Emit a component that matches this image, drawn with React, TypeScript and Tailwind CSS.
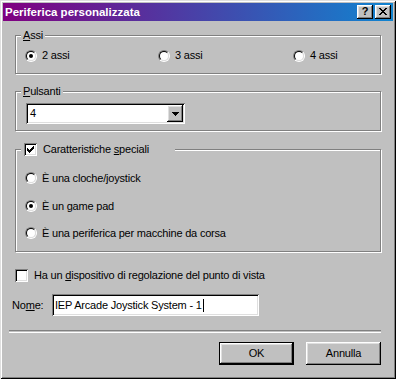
import React from "react";

const raised =
  "shadow-[inset_-1px_-1px_0_#000,inset_1px_1px_0_#fff,inset_-2px_-2px_0_#808080,inset_2px_2px_0_#dfdfdf]";
const sunken =
  "shadow-[inset_1px_1px_0_#808080,inset_-1px_-1px_0_#fff,inset_2px_2px_0_#000,inset_-2px_-2px_0_#dfdfdf]";

function Radio({ checked }: { checked?: boolean }) {
  return (
    <span className="relative inline-block w-[12px] h-[12px] shrink-0 rounded-full border border-t-[#808080] border-l-[#808080] border-r-white border-b-white">
      <span className="absolute inset-0 rounded-full border border-t-black border-l-black border-r-[#dfdfdf] border-b-[#dfdfdf] bg-white flex items-center justify-center">
        {checked && <span className="block w-[4px] h-[4px] rounded-full bg-black" />}
      </span>
    </span>
  );
}

function Check({ checked }: { checked?: boolean }) {
  return (
    <span className={`relative inline-block w-[13px] h-[13px] shrink-0 bg-white ${sunken}`}>
      {checked && (
        <svg className="absolute left-[3px] top-[3px]" width="7" height="7" viewBox="0 0 7 7">
          <path d="M0 2h1v1h1v1h1v-1h1v-1h1v-1h1v-1h1v3h-1v1h-1v1h-1v1h-1v1h-1v-1h-1v-1h-1v-1h-1z" fill="#000" />
        </svg>
      )}
    </span>
  );
}

function Group({
  label,
  className,
  children,
}: {
  label: React.ReactNode;
  className?: string;
  children?: React.ReactNode;
}) {
  return (
    <div
      className={`relative w-[366px] border border-[#808080] shadow-[inset_1px_1px_0_#fff,1px_1px_0_#fff] ${className ?? ""}`}
    >
      <div className="absolute left-[5px] top-[-7px] bg-[#c0c0c0] px-[2px] leading-[13px] flex items-center">
        {label}
      </div>
      {children}
    </div>
  );
}

export default function App() {
  return (
    <div className="w-[396px] h-[379px] bg-[#c0c0c0] relative flex flex-col text-[11px] leading-[13px] tracking-[-0.2px] text-black font-['Liberation_Sans',Arial,sans-serif] shadow-[inset_1px_1px_0_#dfdfdf,inset_-1px_-1px_0_#000,inset_2px_2px_0_#fff,inset_-2px_-2px_0_#808080]">
      {/* Title bar */}
      <div className="mt-[3px] mx-[3px] h-[18px] flex items-center bg-[linear-gradient(to_right,#800080,#1084d0)]">
        <span className="ml-[2px] text-white font-bold text-[11.5px] tracking-normal">Periferica personalizzata</span>
        <div className="ml-auto mr-[2px] flex gap-[2px]">
          <div className={`w-[16px] h-[14px] bg-[#c0c0c0] ${raised} flex items-center justify-center`}>
            <span className="font-bold text-[11px] leading-[11px] mt-[-1px] tracking-normal">?</span>
          </div>
          <div className={`w-[16px] h-[14px] bg-[#c0c0c0] ${raised} flex items-center justify-center`}>
            <svg width="8" height="7" viewBox="0 0 8 7" className="mt-[-1px]">
              <path
                d="M0 0h2v1h1v1h2v-1h1v-1h2v1h-1v1h-1v1h-1v1h1v1h1v1h1v1h-2v-1h-1v-1h-2v1h-1v1h-2v-1h1v-1h1v-1h1v-1h-1v-1h-1v-1h-1z"
                fill="#000"
              />
            </svg>
          </div>
        </div>
      </div>

      {/* Assi */}
      <Group
        className="ml-[15px] mt-[14px] h-[39px]"
        label={
          <span>
            <span className="underline">A</span>ssi
          </span>
        }
      >
        <div className="flex pl-[9px] pt-[13px]">
          <div className="w-[133px] flex items-center gap-[5px]">
            <Radio checked />
            <span>2 assi</span>
          </div>
          <div className="w-[135px] flex items-center gap-[5px]">
            <Radio />
            <span>3 assi</span>
          </div>
          <div className="flex items-center gap-[5px]">
            <Radio />
            <span>4 assi</span>
          </div>
        </div>
      </Group>

      {/* Pulsanti */}
      <Group
        className="ml-[15px] mt-[17px] h-[40px]"
        label={
          <span>
            <span className="underline">P</span>ulsanti
          </span>
        }
      >
        <div className="pl-[10px] pt-[11px]">
          <div className={`w-[159px] h-[21px] bg-white ${sunken} flex items-center p-[2px]`}>
            <span className="ml-[2px] flex-1">4</span>
            <div className={`w-[16px] h-[17px] bg-[#c0c0c0] ${raised} flex items-center justify-center`}>
              <svg width="7" height="4" viewBox="0 0 7 4">
                <path d="M0 0h7v1h-1v1h-1v1h-1v1h-1v-1h-1v-1h-1v-1h-1z" fill="#000" />
              </svg>
            </div>
          </div>
        </div>
      </Group>

      {/* Caratteristiche speciali */}
      <Group
        className="ml-[15px] mt-[18px] h-[103px]"
        label={
          <span className="flex items-center gap-[6px]">
            <span className="ml-[1px] flex">
              <Check checked />
            </span>
            <span className="w-[130px]">
              Caratteristiche <span className="underline">s</span>peciali
            </span>
          </span>
        }
      >
        <div className="pl-[9px] pt-[22px] flex flex-col">
          <div className="flex items-center gap-[5px] h-[12px]">
            <Radio />
            <span>È una cloche/joystick</span>
          </div>
          <div className="flex items-center gap-[5px] h-[12px] mt-[16px]">
            <Radio checked />
            <span>È un game pad</span>
          </div>
          <div className="flex items-center gap-[5px] h-[12px] mt-[15px]">
            <Radio />
            <span>È una periferica per macchine da corsa</span>
          </div>
        </div>
      </Group>

      {/* checkbox row */}
      <div className="ml-[15px] mt-[17px] flex items-center gap-[6px] h-[13px]">
        <Check />
        <span>
          Ha un <span className="underline">d</span>ispositivo di regolazione del punto di vista
        </span>
      </div>

      {/* Nome */}
      <div className="ml-[12px] mt-[12px] flex items-center h-[22px]">
        <span className="w-[40px]">
          No<span className="underline">m</span>e:
        </span>
        <div className={`w-[207px] h-[22px] bg-white ${sunken} flex items-center pl-[3px]`}>
          <span>IEP Arcade Joystick System - 1</span>
          <span className="inline-block w-[1px] h-[13px] bg-black ml-[1px]" />
        </div>
      </div>

      {/* separator */}
      <div className="ml-[9px] mt-[14px] w-[372px] h-[2px] border-t border-[#808080] shadow-[0_1px_0_#fff]" />

      {/* buttons */}
      <div className="ml-[219px] mt-[10px] flex gap-[12px]">
        <div className="w-[75px] h-[23px] border border-black">
          <div className={`w-full h-full bg-[#c0c0c0] ${raised} flex items-center justify-center`}>
            OK
          </div>
        </div>
        <div className={`w-[75px] h-[23px] bg-[#c0c0c0] ${raised} flex items-center justify-center`}>
          Annulla
        </div>
      </div>
    </div>
  );
}
